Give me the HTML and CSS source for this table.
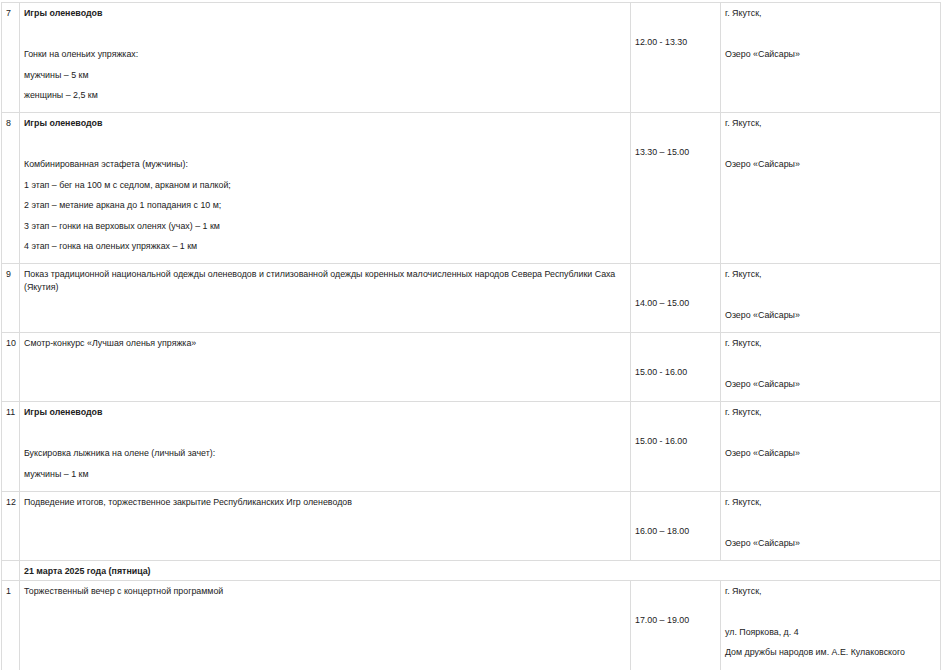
FILE: index.html
```html
<!DOCTYPE html>
<html lang="ru">
<head>
<meta charset="utf-8">
<title>Программа</title>
<link rel="stylesheet" href="styles.css">
</head>
<body>
<div class="page">
<table class="schedule">
  <colgroup>
    <col class="c-num"><col class="c-desc"><col class="c-time"><col class="c-loc">
  </colgroup>
  <tbody>
    <tr>
      <td class="num">7</td>
      <td>
        <p class="b">Игры оленеводов</p>
        <p class="spaced">Гонки на оленьих упряжках:</p>
        <p>мужчины – 5 км</p>
        <p>женщины – 2,5 км</p>
      </td>
      <td class="time">12.00 - 13.30</td>
      <td>
        <p>г. Якутск,</p>
        <p class="spaced">Озеро «Сайсары»</p>
      </td>
    </tr>
    <tr>
      <td class="num">8</td>
      <td>
        <p class="b">Игры оленеводов</p>
        <p class="spaced">Комбинированная эстафета (мужчины):</p>
        <p>1 этап – бег на 100 м с седлом, арканом и палкой;</p>
        <p>2 этап – метание аркана до 1 попадания с 10 м;</p>
        <p>3 этап – гонки на верховых оленях (учах) – 1 км</p>
        <p>4 этап – гонка на оленьих упряжках – 1 км</p>
      </td>
      <td class="time">13.30 – 15.00</td>
      <td>
        <p>г. Якутск,</p>
        <p class="spaced">Озеро «Сайсары»</p>
      </td>
    </tr>
    <tr>
      <td class="num">9</td>
      <td>
        <p>Показ традиционной национальной одежды оленеводов и стилизованной одежды коренных малочисленных народов Севера Республики Саха (Якутия)</p>
      </td>
      <td class="time">14.00 – 15.00</td>
      <td>
        <p>г. Якутск,</p>
        <p class="spaced">Озеро «Сайсары»</p>
      </td>
    </tr>
    <tr>
      <td class="num">10</td>
      <td>
        <p>Смотр-конкурс «Лучшая оленья упряжка»</p>
      </td>
      <td class="time">15.00 - 16.00</td>
      <td>
        <p>г. Якутск,</p>
        <p class="spaced">Озеро «Сайсары»</p>
      </td>
    </tr>
    <tr>
      <td class="num">11</td>
      <td>
        <p class="b">Игры оленеводов</p>
        <p class="spaced">Буксировка лыжника на олене (личный зачет):</p>
        <p>мужчины – 1 км</p>
      </td>
      <td class="time">15.00 - 16.00</td>
      <td>
        <p>г. Якутск,</p>
        <p class="spaced">Озеро «Сайсары»</p>
      </td>
    </tr>
    <tr>
      <td class="num">12</td>
      <td>
        <p>Подведение итогов, торжественное закрытие Республиканских Игр оленеводов</p>
      </td>
      <td class="time">16.00 – 18.00</td>
      <td>
        <p>г. Якутск,</p>
        <p class="spaced">Озеро «Сайсары»</p>
      </td>
    </tr>
    <tr class="date-row">
      <td class="num"></td>
      <td colspan="3" class="b">21 марта 2025 года (пятница)</td>
    </tr>
    <tr>
      <td class="num">1</td>
      <td>
        <p>Торжественный вечер с концертной программой</p>
      </td>
      <td class="time">17.00 – 19.00</td>
      <td>
        <p>г. Якутск,</p>
        <p class="spaced">ул. Пояркова, д. 4</p>
        <p>Дом дружбы народов им. А.Е. Кулаковского</p>
        <p class="spaced">&nbsp;</p>
      </td>
    </tr>
  </tbody>
</table>
</div>
</body>
</html>
```

FILE: styles.css
```css
html, body {
  margin: 0;
  padding: 0;
  background: #ffffff;
}

.page {
  padding: 2px 0 0 1px;
  font-family: "Liberation Sans", Arial, sans-serif;
  font-size: 8.85px;
  line-height: 12.5px;
  color: #222222;
}

.schedule {
  width: 940px;
  border-collapse: collapse;
  table-layout: fixed;
  border: 1px solid #dcdcdc;
}

.c-num { width: 18px; }
.c-desc { width: 611px; }
.c-time { width: 90px; }
.c-loc { width: 220px; }

.schedule td {
  border: 1px solid #dcdcdc;
  padding: 4px 2px 2.5px 4px;
  vertical-align: top;
}

.schedule td.num {
  padding-left: 4px;
  padding-right: 0;
}

.schedule td.time {
  padding-top: 33px;
}

.schedule p {
  margin: 0 0 8px;
}

.schedule p.spaced {
  padding-top: 20.5px;
}

.b {
  font-weight: bold;
}
```
